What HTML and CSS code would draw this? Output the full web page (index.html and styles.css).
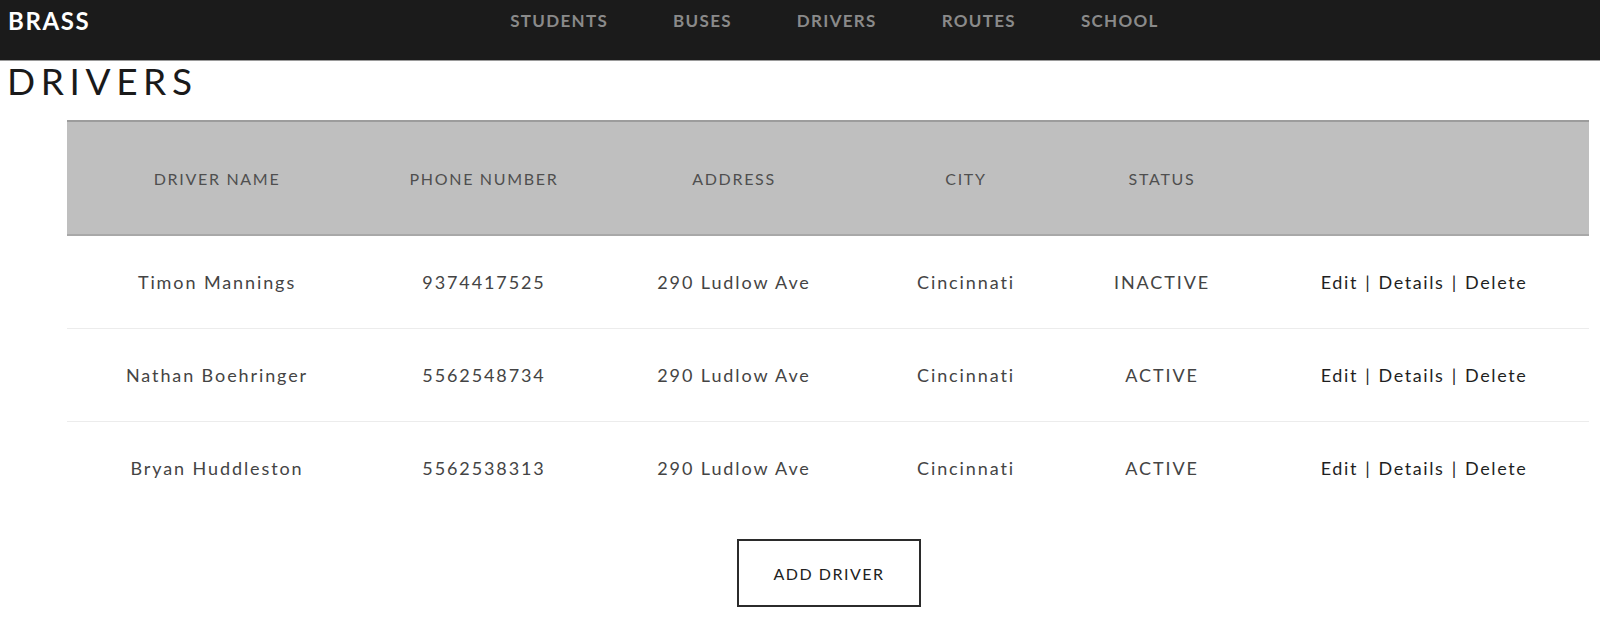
FILE: index.html
```html
<!DOCTYPE html>
<html>
<head>
<meta charset="utf-8">
<link rel="stylesheet" href="styles.css">
</head>
<body>
<header class="navbar">
  <a class="brand" href="#">BRASS</a>
  <nav class="nav-links">
    <a href="#">STUDENTS</a>
    <a href="#">BUSES</a>
    <a href="#">DRIVERS</a>
    <a href="#">ROUTES</a>
    <a href="#">SCHOOL</a>
  </nav>
</header>
<main class="page">
  <h1 class="title">DRIVERS</h1>
  <table class="drivers">
    <colgroup>
      <col class="c1"><col class="c2"><col class="c3"><col class="c4"><col class="c5"><col class="c6">
    </colgroup>
    <thead>
      <tr>
        <th>DRIVER NAME</th>
        <th>PHONE NUMBER</th>
        <th>ADDRESS</th>
        <th>CITY</th>
        <th>STATUS</th>
        <th></th>
      </tr>
    </thead>
    <tbody>
      <tr>
        <td>Timon Mannings</td>
        <td>9374417525</td>
        <td>290 Ludlow Ave</td>
        <td>Cincinnati</td>
        <td>INACTIVE</td>
        <td class="actions"><a href="#">Edit</a> | <a href="#">Details</a> | <a href="#">Delete</a></td>
      </tr>
      <tr>
        <td>Nathan Boehringer</td>
        <td>5562548734</td>
        <td>290 Ludlow Ave</td>
        <td>Cincinnati</td>
        <td>ACTIVE</td>
        <td class="actions"><a href="#">Edit</a> | <a href="#">Details</a> | <a href="#">Delete</a></td>
      </tr>
      <tr>
        <td>Bryan Huddleston</td>
        <td>5562538313</td>
        <td>290 Ludlow Ave</td>
        <td>Cincinnati</td>
        <td>ACTIVE</td>
        <td class="actions"><a href="#">Edit</a> | <a href="#">Details</a> | <a href="#">Delete</a></td>
      </tr>
    </tbody>
  </table>
  <div class="btn-row">
    <a class="btn" href="#">ADD DRIVER</a>
  </div>
</main>
</body>
</html>
```
FILE: styles.css
```css
* { box-sizing: border-box; }
html, body { margin: 0; padding: 0; background: #fff; }
body {
  font-family: "Lato", "Open Sans", "Liberation Sans", sans-serif;
  color: #222;
  overflow: hidden;
}
a { text-decoration: none; color: inherit; }

.navbar {
  height: 61px;
  background: #1b1b1b;
  border-bottom: 1px solid #9a9a9a;
  display: flex;
  align-items: flex-start;
}
.brand {
  color: #fff;
  font-weight: 700;
  font-size: 24px;
  letter-spacing: 1.6px;
  padding: 6px 0 0 8px;
}
.nav-links {
  display: flex;
  margin-left: 420px;
  padding-top: 10px;
}
.nav-links a {
  color: #8a8a8a;
  font-weight: 700;
  font-size: 17px;
  letter-spacing: 1.3px;
  margin-right: 65px;
}

.title {
  margin: 0;
  padding: 1px 0 0 7px;
  font-weight: 400;
  font-size: 37px;
  letter-spacing: 5.6px;
  color: #1a1a1a;
  line-height: 38px;
  height: 59px;
}

.drivers {
  margin-left: 67px;
  width: 1522px;
  border-collapse: collapse;
  table-layout: fixed;
}
.c1 { width: 300px; }
.c2 { width: 234px; }
.c3 { width: 266px; }
.c4 { width: 198px; }
.c5 { width: 194px; }
.c6 { width: 330px; }

.drivers thead tr {
  background: #bfbfbf;
  border-top: 2px solid #9c9c9c;
  border-bottom: 2px solid #a8a8a8;
}
.drivers th {
  height: 114px;
  font-weight: 400;
  font-size: 16px;
  letter-spacing: 1.7px;
  color: #4f4f4f;
  text-align: center;
  vertical-align: middle;
  padding: 0;
}
.drivers tbody tr { border-bottom: 1px solid #ececec; }
.drivers tbody tr:last-child { border-bottom: none; }
.drivers td {
  height: 93px;
  text-align: center;
  vertical-align: middle;
  font-size: 18px;
  letter-spacing: 1.9px;
  color: #444;
  padding: 0;
}
.drivers td.actions { color: #1f1f1f; letter-spacing: 1.6px; word-spacing: 1px; }

.btn-row {
  display: flex;
  justify-content: center;
  padding-top: 25px;
  padding-left: 58px;
}
.btn {
  display: flex;
  align-items: center;
  justify-content: center;
  width: 184px;
  height: 68px;
  border: 2px solid #2b2b2b;
  font-size: 16px;
  letter-spacing: 1.5px;
  color: #222;
}
```
